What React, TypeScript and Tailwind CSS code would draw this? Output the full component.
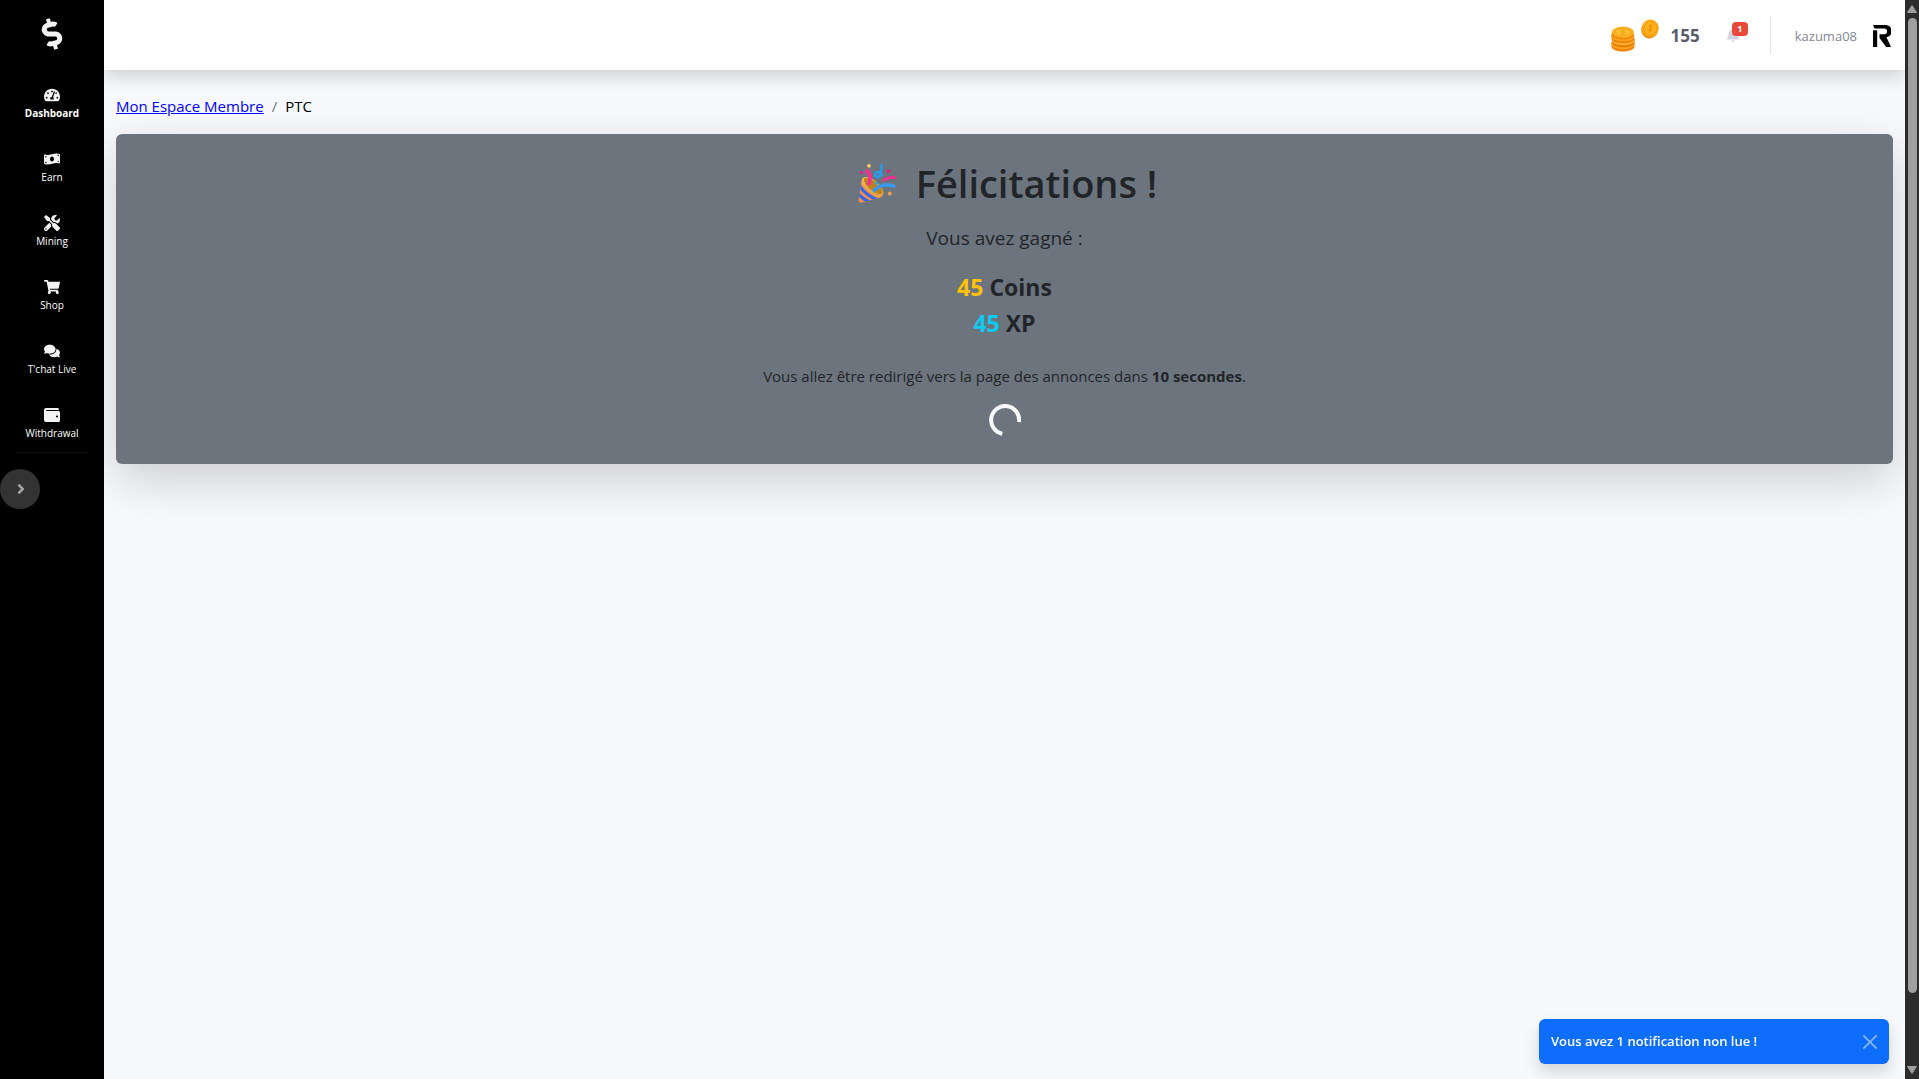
import React from "react";
import {
  FaTachometerAlt,
  FaMoneyBillWave,
  FaTools,
  FaShoppingCart,
  FaComments,
  FaWallet,
  FaDollarSign,
  FaBell,
  FaAngleRight,
} from "react-icons/fa";

const navItems = [
  { label: "Dashboard", Icon: FaTachometerAlt, active: true },
  { label: "Earn", Icon: FaMoneyBillWave, active: false },
  { label: "Mining", Icon: FaTools, active: false },
  { label: "Shop", Icon: FaShoppingCart, active: false },
  { label: "T'chat Live", Icon: FaComments, active: false },
  { label: "Withdrawal", Icon: FaWallet, active: false },
];

function CoinStack() {
  return (
    <svg viewBox="0 0 24 26" className="h-[26px] w-6" aria-hidden="true">
      <path d="M.5 16v4.500c0 2.800 5 5 11.400 5s11.500-2.200 11.500-5V16z" fill="#ee8309" />
      <path d="M.5 16v2.500c0 2.600 5 4.700 11.400 4.700s11.500-2.100 11.500-4.700V16z" fill="#fda41c" />
      <path d="M1 12v4.500c0 2.600 5 4.800 11.400 4.800s11.100-2.200 11.100-4.800V12z" fill="#e87c08" />
      <path d="M1 12v2.700c0 2.600 5 4.600 11.400 4.600s11.100-2 11.100-4.600V12z" fill="#fcae2b" />
      <path d="M.5 9v3.500c0 2.600 5 4.600 11.300 4.600s11.300-2 11.300-4.600V9z" fill="#e87c08" />
      <path d="M.5 8v3c0 2.600 5 4.600 11.300 4.600s11.300-2 11.300-4.600V8z" fill="#fda41c" />
      <path d="M.8 6.500V9c0 2.600 5 4.600 11 4.600s11-2 11-4.600V6.500z" fill="#ef8b0c" />
      <ellipse cx="11.800" cy="6.200" rx="11" ry="5.600" fill="#fdb022" />
      <ellipse cx="11.800" cy="6.200" rx="8.200" ry="3.900" fill="#ffbd2c" stroke="#f39c16" strokeWidth="0.7" />
      <path d="M14 4.800c-2-1-4.600-.3-3.800.8s4.200.2 4 1.500-3.200 1.200-4.600.4M13.300 3.800l-3 5" fill="none" stroke="#ef9a16" strokeWidth="0.8" />
    </svg>
  );
}

function Coin() {
  return (
    <svg viewBox="0 0 18 20" className="h-5 w-[18px]" aria-hidden="true">
      <ellipse cx="8.700" cy="10.400" rx="8.400" ry="9" transform="rotate(14 8.700 10.400)" fill="#e8880e" />
      <ellipse cx="9.300" cy="9.400" rx="8.400" ry="8.900" transform="rotate(14 9.300 9.400)" fill="#fdaa14" />
      <ellipse cx="9.300" cy="9.400" rx="6.400" ry="7" transform="rotate(14 9.300 9.400)" fill="#ffb01c" stroke="#f39a0f" strokeWidth="0.8" />
      <path d="M11.600 7.200c-1-1.400-3.800-.9-3.500.7s3.200 1.100 3 2.700-3.200 1.600-3.900.2M10.200 5L8.700 13.600" fill="none" stroke="#e58d0c" strokeWidth="0.9" />
    </svg>
  );
}

function PartyPopper() {
  return (
    <svg viewBox="0 0 38 40" className="h-10 w-[38px]" aria-hidden="true">
      <defs>
        <clipPath id="cone">
          <path d="M4.300 14.500C9 25 16 31 25 31.500c-.5 1.800-1.500 2.500-3 3L4 39.500C1.500 40 .2 39 .6 36.500z" />
        </clipPath>
        <linearGradient id="gold" x1="0" y1="0" x2="1" y2="1">
          <stop offset="0" stopColor="#f8c860" />
          <stop offset="1" stopColor="#e09a3c" />
        </linearGradient>
      </defs>
      <g clipPath="url(#cone)">
        <path d="M0 12h28v30H0z" fill="#f08c50" />
        <path d="M1 22q6 10 20 15.500M0 30.500q5 6 13 9" fill="none" stroke="#3468e6" strokeWidth="3.200" />
        <path d="M3 18.500q7 11 20 16.500" fill="none" stroke="#f3a548" strokeWidth="1.500" />
      </g>
      <ellipse cx="14.700" cy="23.500" rx="13" ry="6" transform="rotate(40 14.700 23.500)" fill="url(#gold)" />
      <ellipse cx="15.200" cy="22.900" rx="11.400" ry="4.500" transform="rotate(40 15.200 22.900)" fill="#bd831f" />
      <path d="M11 20.500C12.800 15 12 11 9.300 8" fill="none" stroke="#f92d91" strokeWidth="3.800" strokeLinecap="round" />
      <path d="M16 27.500C20 23.500 27 20.500 36 23.200" fill="none" stroke="#3a98ef" strokeWidth="3.400" strokeLinecap="round" />
      <path d="M23.800 2L22.600 11c-.8 4-6 3.800-5.500.5s5-3.800 6.800.8" fill="none" stroke="#2a9be8" strokeWidth="2.500" strokeLinecap="round" />
      <path d="M26 17.500c2-2.700 5.500-3.500 10.500-3" fill="none" stroke="#ef2f91" strokeWidth="2.800" strokeLinecap="round" />
      <circle cx="11" cy="2.800" r="1.900" fill="#f7ce5b" />
      <circle cx="3.600" cy="9.500" r="1.700" fill="#e3268c" />
      <circle cx="30.500" cy="8.300" r="1.900" fill="#dd2387" />
      <circle cx="31.800" cy="30.500" r="1.900" fill="#f3a04a" />
      <circle cx="18.500" cy="20.200" r="1.500" fill="#2c9ff0" />
    </svg>
  );
}

function AvatarMark() {
  return (
    <svg viewBox="0 0 18 22" className="h-[22px] w-[18px]" aria-hidden="true">
      <path d="M0 0h11.500a5.900 5.900 0 0 1 2 12.200L18 22h-4.800L6.500 13V9.200h4.700a2.900 2.900 0 0 0 0-5.800H1.500z" fill="#000" />
      <path d="M0 5.300h4.200V22H0z" fill="#000" />
    </svg>
  );
}

function Sidebar() {
  return (
    <aside className="z-20 flex w-[104px] shrink-0 flex-col bg-black text-white">
      <a href="#" aria-label="Accueil" className="flex h-[68px] items-center justify-center text-[#f3f3f3]">
        <FaDollarSign className="size-8 -rotate-[15deg]" />
      </a>
      <nav className="flex flex-col">
        {navItems.map(({ label, Icon, active }) => (
          <a key={label} href="#" className="flex h-16 flex-col items-center justify-center gap-0.5 whitespace-nowrap pt-2">
            <Icon className="size-4 text-[#f3f3f3]" />
            <span className={active ? "text-[10px] leading-4 font-bold" : "text-[10px] leading-4 font-medium"}>{label}</span>
          </a>
        ))}
      </nav>
      <hr className="mx-4 mb-4 border-[#111]" />
      <button
        type="button"
        aria-label="Agrandir le menu"
        className="flex size-10 items-center justify-center rounded-full bg-[#333] pl-0.5 text-[#a5a5a5]"
      >
        <FaAngleRight className="size-4" />
      </button>
    </aside>
  );
}

function Topbar() {
  return (
    <header className="z-10 flex h-[70px] items-center justify-end bg-white pr-3.5 shadow-[0_8px_16px_rgba(0,0,0,0.15)]">
      <div className="flex items-center">
        <span className="mt-2">
          <CoinStack />
        </span>
        <span className="mb-3 ml-1.5">
          <Coin />
        </span>
        <span className="ml-3 pt-0.5 text-[17px] leading-6 font-bold text-[#5a5c69]">155</span>
      </div>
      <button type="button" aria-label="Notifications" className="relative mr-2 ml-[26px] text-[#d1d3e2]">
        <FaBell className="size-3.5" />
        <span className="absolute -top-1.5 left-1.5 flex h-3.5 w-4 items-center justify-center rounded bg-[#e74a3b] text-[9px] font-bold text-white">
          1
        </span>
      </button>
      <div className="mr-6 ml-[22px] h-[38px] w-px bg-[#e3e6f0]" />
      <a href="#" className="flex items-center gap-4 pt-px text-[13px] leading-5 text-[#858796]">
        kazuma08
        <AvatarMark />
      </a>
    </header>
  );
}

function RewardCard() {
  return (
    <section className="flex flex-col items-center rounded-md bg-[#6c757d] pt-6 pb-7 text-[#212529] shadow-[0_16px_48px_rgba(0,0,0,0.175)]">
      <h1 className="flex items-center gap-5 pl-1.5 text-[38px] leading-[50px] font-semibold">
        <PartyPopper />
        Félicitations !
      </h1>
      <p className="mt-[15px] text-[19px] leading-[30px]">Vous avez gagné :</p>
      <p className="mt-4 text-center text-[23px] leading-9 font-bold">
        <span className="text-[#ffc107]">45</span> Coins
        <br />
        <span className="text-[#0dcaf0]">45</span> XP
      </p>
      <p className="mt-[23px] text-[15px] leading-6">
        Vous allez être redirigé vers la page des annonces dans <strong>10 secondes</strong>.
      </p>
      <svg viewBox="0 0 32 32" role="status" aria-label="Chargement" className="mt-4 size-8">
        <path d="M30 18A14 14 0 1 0 13.300 29.700" fill="none" stroke="#f8f9fa" strokeWidth="4" />
      </svg>
    </section>
  );
}

function ScrollTrack() {
  return (
    <div aria-hidden="true" className="z-30 flex w-3.5 shrink-0 flex-col items-center bg-[#2c2c2c] py-[5px]">
      <svg viewBox="0 0 10 8" className="h-2 w-2.5">
        <path d="M5 0.500L9.500 7.500H.5z" fill="#9f9f9f" stroke="#9f9f9f" strokeLinejoin="round" />
      </svg>
      <div className="mt-[5px] w-[9px] grow-[975] basis-0 rounded-full bg-[#9f9f9f]" />
      <div className="grow-[73] basis-0" />
      <svg viewBox="0 0 10 8" className="h-2 w-2.5">
        <path d="M5 7.500L9.500 .5H.5z" fill="#9f9f9f" stroke="#9f9f9f" strokeLinejoin="round" />
      </svg>
    </div>
  );
}

function Toast() {
  return (
    <div
      role="alert"
      className="fixed right-[30px] bottom-[15px] flex h-[45px] w-[350px] items-center justify-between rounded-md bg-[#0d6efd] px-3 text-[13px] font-semibold text-white shadow-[0_8px_16px_rgba(0,0,0,0.15)]"
    >
      Vous avez 1 notification non lue !
      <button type="button" aria-label="Fermer" className="opacity-50">
        <svg viewBox="0 0 14 14" className="size-3.5">
          <path d="M.8.8l12.400 12.400M13.200.8L.8 13.200" stroke="#fff" strokeWidth="1.700" strokeLinecap="round" />
        </svg>
      </button>
    </div>
  );
}

export default function App() {
  return (
    <div className="flex h-screen overflow-hidden bg-[#f8f9fc] font-['Open_Sans',sans-serif]">
      <Sidebar />
      <div className="flex min-w-0 grow flex-col">
        <Topbar />
        <main className="px-3 pt-6">
          <nav aria-label="Fil d'Ariane" className="mb-4 text-[15px] leading-6 text-black">
            <ol className="flex gap-2">
              <li>
                <a href="#" className="text-[#0000ff] underline">
                  Mon Espace Membre
                </a>
              </li>
              <li aria-hidden="true" className="text-[#6c757d]">
                /
              </li>
              <li aria-current="page">PTC</li>
            </ol>
          </nav>
          <RewardCard />
        </main>
      </div>
      <ScrollTrack />
      <Toast />
    </div>
  );
}
